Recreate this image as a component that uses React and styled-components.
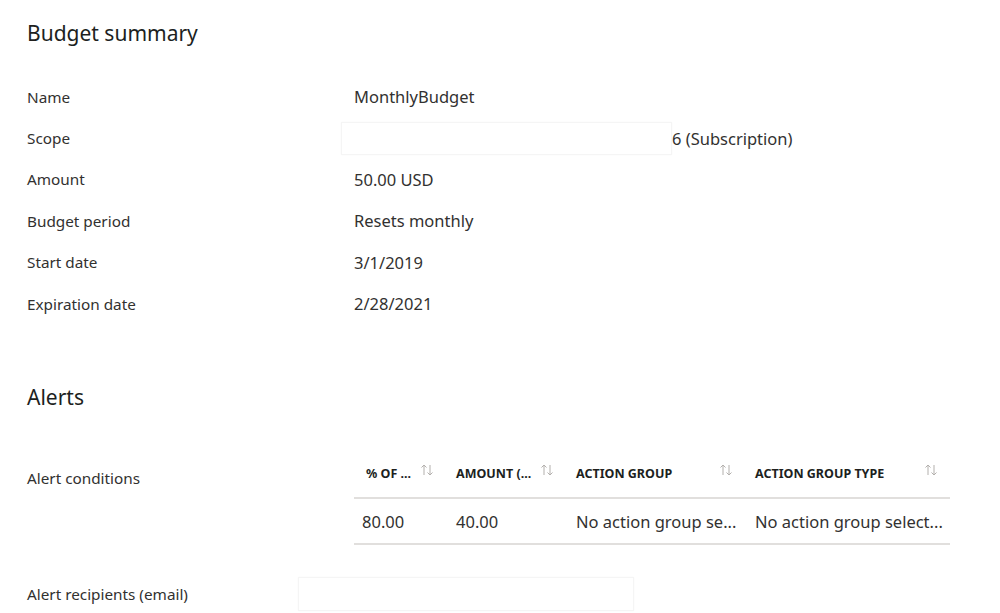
import styled, { createGlobalStyle } from "styled-components";

const GlobalStyle = createGlobalStyle`
  html, body {
    margin: 0;
    padding: 0;
    background: #ffffff;
  }
  body {
    font-family: "Noto Sans", "Open Sans", sans-serif;
    color: #323130;
  }
`;

const Page = styled.div`
  width: 1000px;
  height: 613px;
  overflow: hidden;
  padding: 18px 0 0 27px;
  box-sizing: border-box;
`;

const SectionTitle = styled.h2`
  margin: 0;
  font-size: 21px;
  font-weight: 400;
  line-height: 30px;
  color: #201f1e;
`;

const SummaryGrid = styled.div`
  display: grid;
  grid-template-columns: 327px 1fr;
  grid-auto-rows: 41.4px;
  margin-top: 28px;
  align-items: center;
`;

const Label = styled.div`
  font-size: 15.3px;
  color: #323130;
`;

const Value = styled.div`
  display: flex;
  align-items: center;
  font-size: 16.5px;
  color: #323130;
`;

const Redacted = styled.div`
  width: ${(p) => p.$w}px;
  height: ${(p) => p.$h}px;
  margin-left: ${(p) => p.$offset || 0}px;
  background: #fff;
  border: 1px solid #f5f5f5;
  box-shadow: 0 0 2px rgba(0, 0, 0, 0.03);
  box-sizing: border-box;
`;

const AlertsTitle = styled(SectionTitle)`
  margin-top: 58px;
`;

const ConditionsRow = styled.div`
  display: grid;
  grid-template-columns: 327px 596px;
  margin-top: 45px;
`;

const ConditionsLabel = styled(Label)`
  padding-top: 11px;
`;

const Table = styled.div`
  display: grid;
  grid-template-columns: 92px 120px 179px 205px;
`;

const HeaderCell = styled.div`
  display: flex;
  align-items: center;
  justify-content: space-between;
  height: 42px;
  box-sizing: border-box;
  padding: 0 12px 8px ${(p) => p.$pad}px;
  border-bottom: 2px solid #e1dfdd;
  font-size: 12.5px;
  font-weight: 700;
  color: #201f1e;
  white-space: nowrap;
`;

const SortIcon = styled.svg`
  width: 14px;
  height: 12px;
  margin-top: -6px;
  flex-shrink: 0;
`;

const Cell = styled.div`
  display: flex;
  align-items: center;
  height: 44px;
  padding-left: ${(p) => p.$pad}px;
  border-bottom: 2px solid #e1dfdd;
  font-size: 16.5px;
  color: #323130;
  white-space: nowrap;
`;

const RecipientsRow = styled.div`
  display: grid;
  grid-template-columns: 271px 1fr;
  align-items: center;
  margin-top: 32px;
`;

const Sort = () => (
  <SortIcon viewBox="0 0 14 12" fill="none" stroke="#b3b0ad" strokeWidth="1">
    <path d="M4 11V1M1.5 3.5L4 1l2.5 2.5" />
    <path d="M10 1v10M7.5 8.5L10 11l2.5-2.5" />
  </SortIcon>
);

const summary = [
  ["Name", "MonthlyBudget"],
  ["Scope", null],
  ["Amount", "50.00 USD"],
  ["Budget period", "Resets monthly"],
  ["Start date", "3/1/2019"],
  ["Expiration date", "2/28/2021"],
];

const columns = [
  { title: "% OF ...", pad: 12, value: "80.00", vpad: 8 },
  { title: "AMOUNT (...", pad: 10, value: "40.00", vpad: 10 },
  { title: "ACTION GROUP", pad: 10, value: "No action group se...", vpad: 10 },
  { title: "ACTION GROUP TYPE", pad: 10, value: "No action group select...", vpad: 10 },
];

export default function App() {
  return (
    <Page>
      <GlobalStyle />
      <SectionTitle>Budget summary</SectionTitle>
      <SummaryGrid>
        {summary.map(([label, value]) => [
          <Label key={label}>{label}</Label>,
          <Value key={label + "v"}>
            {value ?? (
              <>
                <Redacted $w={331} $h={33} $offset={-13} />
                <span>6 (Subscription)</span>
              </>
            )}
          </Value>,
        ])}
      </SummaryGrid>

      <AlertsTitle>Alerts</AlertsTitle>

      <ConditionsRow>
        <ConditionsLabel>Alert conditions</ConditionsLabel>
        <Table>
          {columns.map((c) => (
            <HeaderCell key={c.title} $pad={c.pad}>
              <span>{c.title}</span>
              <Sort />
            </HeaderCell>
          ))}
          {columns.map((c) => (
            <Cell key={c.title + "v"} $pad={c.vpad}>
              {c.value}
            </Cell>
          ))}
        </Table>
      </ConditionsRow>

      <RecipientsRow>
        <Label>Alert recipients (email)</Label>
        <Redacted $w={336} $h={34} />
      </RecipientsRow>
    </Page>
  );
}
